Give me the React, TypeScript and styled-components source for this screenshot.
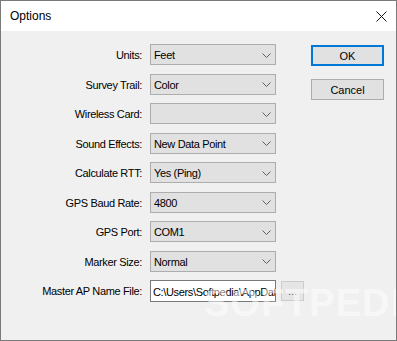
import React from "react";
import styled, { createGlobalStyle } from "styled-components";

const GlobalStyle = createGlobalStyle`
	html, body {
		margin: 0;
		padding: 0;
		background: #f0f0f0;
	}
	body {
		font-family: "Liberation Sans", Arial, sans-serif;
		font-size: 11px;
		color: #000;
	}
`;

const rows = [
	{ label: "Units:", value: "Feet" },
	{ label: "Survey Trail:", value: "Color" },
	{ label: "Wireless Card:", value: "" },
	{ label: "Sound Effects:", value: "New Data Point" },
	{ label: "Calculate RTT:", value: "Yes (Ping)" },
	{ label: "GPS Baud Rate:", value: "4800" },
	{ label: "GPS Port:", value: "COM1" },
	{ label: "Marker Size:", value: "Normal" },
];

function Chevron() {
	return (
		<svg width="9" height="5" viewBox="0 0 9 5">
			<polyline points="0.5,0.5 4.5,4.5 8.5,0.5" fill="none" stroke="#5f5f5f" strokeWidth="1" />
		</svg>
	);
}

function Options() {
	return (
		<Window>
			<TitleBar>
				<span>Options</span>
				<svg width="11" height="11" viewBox="0 0 11 11">
					<path d="M0.5 0.5 L10.5 10.5 M10.5 0.5 L0.5 10.5" stroke="#111" strokeWidth="1" />
				</svg>
			</TitleBar>
			<Body>
				<Form>
					{rows.map((r) => (
						<React.Fragment key={r.label}>
							<Label>{r.label}</Label>
							<Combo>
								<span>{r.value}</span>
								<Chevron />
							</Combo>
						</React.Fragment>
					))}
					<Label>Master AP Name File:</Label>
					<FileRow>
						<TextField>C:\Users\Softpedia\AppData\Local</TextField>
						<BrowseButton>...</BrowseButton>
					</FileRow>
				</Form>
				<Buttons>
					<DialogButton primary>OK</DialogButton>
					<DialogButton>Cancel</DialogButton>
				</Buttons>
				<Watermark>SOFTPEDIA</Watermark>
			</Body>
		</Window>
	);
}

export default function App() {
	return (
		<>
			<GlobalStyle />
			<Options />
		</>
	);
}

const Window = styled.div`
	width: 397px;
	height: 341px;
	box-sizing: border-box;
	border: 1px solid #7a7a7a;
	background: #f0f0f0;
	display: flex;
	flex-direction: column;
	overflow: hidden;
`;

const TitleBar = styled.div`
	height: 30px;
	flex-shrink: 0;
	background: #fff;
	display: flex;
	align-items: center;
	justify-content: space-between;
	padding: 0 9px 0 9px;
	font-size: 12px;
	color: #000;

	svg {
		margin-top: 1px;
	}
`;

const Body = styled.div`
	position: relative;
	flex: 1;
	display: flex;
	align-items: flex-start;
	padding-top: 13px;
`;

const Form = styled.div`
	display: grid;
	grid-template-columns: 141px 126px;
	grid-auto-rows: 21px;
	column-gap: 8px;
	row-gap: 8.5px;
	letter-spacing: -0.35px;
`;

const Label = styled.div`
	display: flex;
	align-items: center;
	justify-content: flex-end;
	white-space: nowrap;
	padding-top: 1px;
`;

const Combo = styled.div`
	box-sizing: border-box;
	height: 21px;
	border: 1px solid #adadad;
	background: #e1e1e1;
	display: flex;
	align-items: center;
	justify-content: space-between;
	padding: 1px 4px 0 3px;
	white-space: nowrap;
`;

const FileRow = styled.div`
	display: flex;
	align-items: flex-start;
	gap: 5px;
	width: 160px;
`;

const TextField = styled.div`
	box-sizing: border-box;
	flex-shrink: 0;
	width: 126px;
	height: 22px;
	border: 1px solid #7a7a7a;
	background: #fff;
	padding: 1px 2px 0 2px;
	display: flex;
	align-items: center;
	white-space: nowrap;
	overflow: hidden;
`;

const BrowseButton = styled.div`
	box-sizing: border-box;
	flex-shrink: 0;
	width: 23px;
	height: 20px;
	margin-top: 1px;
	border: 1px solid #cccccc;
	background: #e5e5e5;
	color: #6d6d6d;
	display: flex;
	align-items: flex-end;
	justify-content: center;
	padding-bottom: 3px;
	letter-spacing: 0;
`;

const Buttons = styled.div`
	display: flex;
	flex-direction: column;
	gap: 13px;
	margin-left: 35px;
	margin-top: 1px;
`;

const DialogButton = styled.div<{ primary?: boolean }>`
	box-sizing: border-box;
	width: 73px;
	height: 21px;
	background: #e1e1e1;
	border: ${(p) => (p.primary ? "2px solid #0078d7" : "1px solid #adadad")};
	display: flex;
	align-items: center;
	justify-content: center;
	padding-top: 1px;
`;

const Watermark = styled.div`
	position: absolute;
	left: 203px;
	top: 251px;
	font-family: "Liberation Sans", Arial, sans-serif;
	font-weight: bold;
	font-size: 38px;
	letter-spacing: 1px;
	color: rgba(255, 255, 255, 0.55);
	pointer-events: none;
	white-space: nowrap;
`;
